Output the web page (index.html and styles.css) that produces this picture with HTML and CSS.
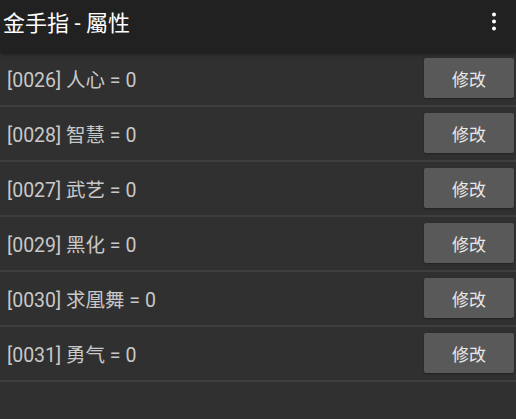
FILE: index.html
```html
<!DOCTYPE html>
<html lang="zh">
<head>
    <meta charset="UTF-8">
    <meta name="viewport" content="width=device-width, initial-scale=1.0">
    <title>金手指 - 屬性</title>
    <link rel="stylesheet" href="styles.css">
</head>
<body>
    <header class="app-bar">
        <h1>金手指 - 屬性</h1>
        <button class="menu-btn" aria-label="更多">
            <svg width="24" height="24" viewBox="0 0 24 24">
                <circle cx="12" cy="5.5" r="2" fill="#fff"/>
                <circle cx="12" cy="12.5" r="2" fill="#fff"/>
                <circle cx="12" cy="19.5" r="2" fill="#fff"/>
            </svg>
        </button>
    </header>

    <ul class="cheat-list">
        <li><span>[0026] 人心 = 0</span><button class="edit-btn">修改</button></li>
        <li><span>[0028] 智慧 = 0</span><button class="edit-btn">修改</button></li>
        <li><span>[0027] 武艺 = 0</span><button class="edit-btn">修改</button></li>
        <li><span>[0029] 黑化 = 0</span><button class="edit-btn">修改</button></li>
        <li><span>[0030] 求凰舞 = 0</span><button class="edit-btn">修改</button></li>
        <li><span>[0031] 勇气 = 0</span><button class="edit-btn">修改</button></li>
    </ul>
</body>
</html>
```

FILE: styles.css
```css
* {
    margin: 0;
    padding: 0;
    box-sizing: border-box;
}
body {
    font-family: Roboto, "Noto Sans CJK SC", sans-serif;
    background-color: #303030;
    height: 419px;
    overflow: hidden;
}
.app-bar {
    height: 52px;
    background-color: #212121;
    display: flex;
    align-items: center;
    justify-content: space-between;
    padding: 0 10px 0 3px;
    box-shadow: 0 2px 4px rgba(0, 0, 0, 0.45);
    position: relative;
}
.app-bar h1 {
    font-size: 22px;
    font-weight: normal;
    color: #ffffff;
    margin-top: -10px;
}
.menu-btn {
    background: none;
    border: none;
    width: 24px;
    height: 24px;
    margin-top: -10px;
}
.cheat-list {
    list-style-type: none;
}
.cheat-list li {
    height: 55px;
    padding: 7px 2px 8px 7px;
    border-bottom: 2px solid #3e3e3e;
    display: flex;
    justify-content: space-between;
    align-items: center;
    color: #c8c8c8;
    font-size: 19.5px;
}
.edit-btn {
    width: 90px;
    height: 40px;
    background-color: #595959;
    color: #e8e8e8;
    border: none;
    border-radius: 2px;
    font-family: Roboto, "Noto Sans CJK SC", sans-serif;
    font-size: 17px;
    box-shadow: 0 1px 2px rgba(0, 0, 0, 0.3);
}
```
